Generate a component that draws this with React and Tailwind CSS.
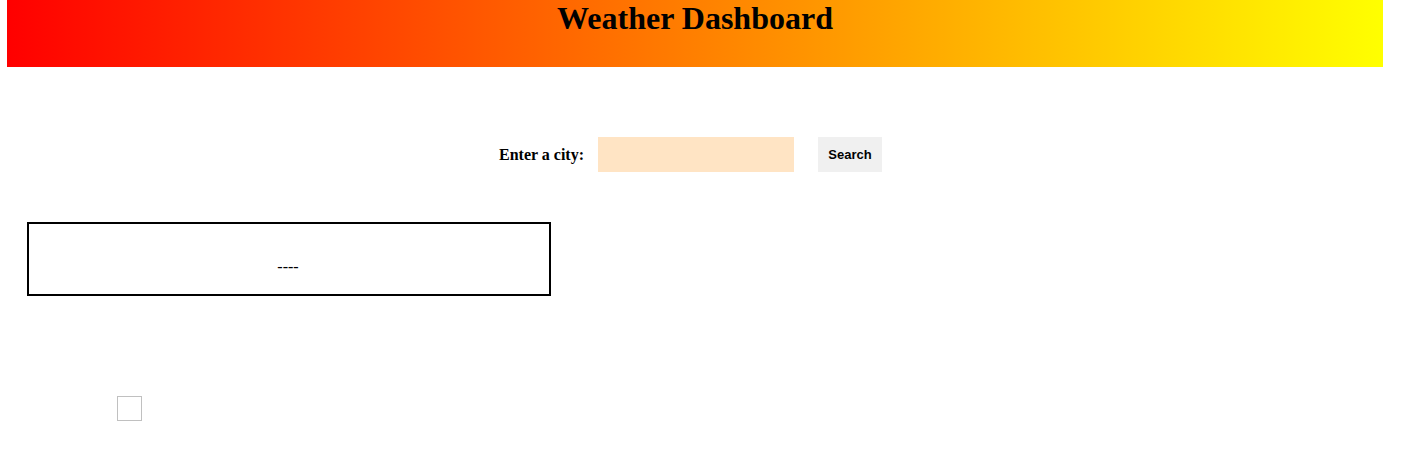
import React from 'react'

export default function App() {
  return (
    <div className="w-[1401px] h-[471px] bg-white overflow-hidden font-['Liberation_Serif',serif] text-black">
      {/* Header */}
      <div className="ml-[7px] w-[1376px] h-[67px] bg-[linear-gradient(to_right,#ff0000,#ffff00)] flex justify-center">
        <h1 className="text-[32px] font-bold leading-[37px] mt-0">Weather Dashboard</h1>
      </div>

      {/* Search row */}
      <div className="mt-[70px] flex items-center h-[35px] pl-[499px]">
        <label className="w-[99px] text-[16px] font-bold">Enter a city:</label>
        <input type="text" className="w-[196px] h-[35px] bg-[#ffe4c4] outline-none border-0" />
        <button className="ml-[24px] w-[64px] h-[35px] bg-[#f0f0f0] text-[13px] font-bold font-['Liberation_Sans',Arial,sans-serif]">
          Search
        </button>
      </div>

      {/* Result box */}
      <div className="ml-[27px] mt-[50px] w-[524px] h-[74px] border-2 border-black flex items-end justify-center pb-[19px]">
        <span className="text-[16px] leading-none pr-[2px]">----</span>
      </div>

      {/* Broken image placeholder */}
      <div className="ml-[117px] mt-[100px] w-[25px] h-[25px] border border-[#c0c0c0]" />
    </div>
  )
}
